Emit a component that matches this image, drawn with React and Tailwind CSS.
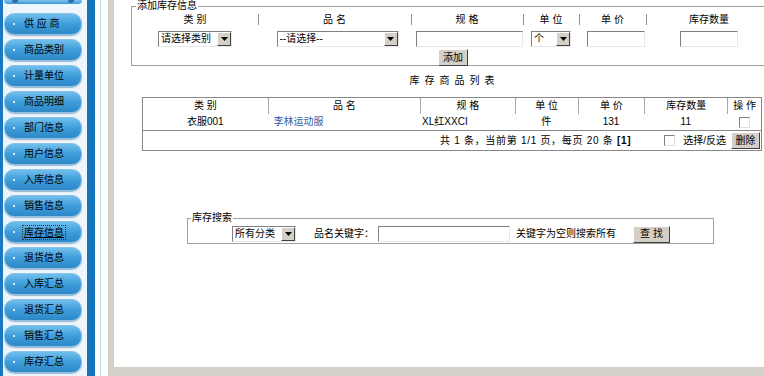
import React from 'react';

const font = { fontFamily: '"Liberation Sans", "Noto Sans CJK SC", sans-serif' };

const menus = ['供 应 商', '商品类别', '计量单位', '商品明细', '部门信息', '用户信息', '入库信息', '销售信息', '库存信息', '退货信息', '入库汇总', '退货汇总', '销售汇总', '库存汇总'];

const Arrow = () => (
  <div className='w-[14px] h-[14px] bg-[#d4d0c8] border border-t-white border-l-white border-r-[#404040] border-b-[#404040] flex items-center justify-center shrink-0'>
    <svg width='7' height='4' viewBox='0 0 7 4'><path d='M0 0h7L3.5 4z' fill='#000' /></svg>
  </div>
);

const Select = ({ text, className }) => (
  <div className={`h-[16px] bg-white border border-t-[#808080] border-l-[#808080] border-r-[#e8e8e8] border-b-[#e8e8e8] flex items-center pl-[2px] ${className}`}>
    <span className='flex-1 text-[10px] leading-[14px] whitespace-nowrap overflow-hidden'>{text}</span>
    <Arrow />
  </div>
);

const Input = ({ className }) => (
  <div className={`h-[16px] bg-white border border-t-[#808080] border-l-[#808080] border-r-[#e8e8e8] border-b-[#e8e8e8] ${className}`} />
);

const Btn = ({ children, className }) => (
  <div className={`bg-[#d4d0c8] border border-t-white border-l-white border-r-[#404040] border-b-[#404040] text-[10px] leading-[14px] flex items-center justify-center ${className}`}>
    {children}
  </div>
);

const Check = ({ className = '' }) => (
  <div className={`w-[11px] h-[11px] bg-white border border-t-[#808080] border-l-[#808080] border-r-[#e0e0e0] border-b-[#e0e0e0] ${className}`} />
);

const Sidebar = () => (
  <div className='w-[87px] h-full bg-[#eef5fb] border-l-[3px] border-l-[#1a78c2] shrink-0 overflow-hidden'>
    <div className='ml-[1px] w-[78px] h-[4px] rounded-b-[6px] bg-gradient-to-b from-[#7cc2ec] to-[#3b97d4] flex justify-between px-[8px]'>
      <div className='w-[6px] h-[3px] rounded-b-full bg-[#2a6fa8]' />
      <div className='w-[6px] h-[3px] rounded-b-full bg-[#2a6fa8]' />
    </div>
    <div className='flex flex-col gap-[4px] mt-[9px]'>
      {menus.map((m) => (
        <div key={m} className='ml-[1px] w-[78px] h-[22px] rounded-[10px] border border-[#8ec2e6] bg-gradient-to-b from-[#6fbfec] via-[#3e9dda] to-[#2d88c8] flex items-center shadow-[0_1px_1px_rgba(0,60,120,0.35)]'>
          <div className='w-[2px] h-[2px] bg-white/80 ml-[8px] mr-[9px]' />
          {m === '库存信息' ? (
            <span className='text-[10px] leading-[11px] text-black underline outline-1 outline-dotted outline-[#333] outline-offset-[1px]'>{m}</span>
          ) : (
            <span className='text-[10px] leading-[14px] text-black whitespace-pre'>{m}</span>
          )}
        </div>
      ))}
    </div>
  </div>
);

const cols = [126, 153, 112, 56, 67, 126];
const heads = ['类 别', '品 名', '规 格', '单 位', '单 价', '库存数量'];

const tcols = [125, 153, 95, 63, 67, 83, 34];
const theads = ['类 别', '品 名', '规 格', '单 位', '单 价', '库存数量', '操 作'];

const Main = () => (
  <div className='flex-1 h-full bg-white overflow-hidden'>
    {/* 添加库存信息 */}
    <fieldset className='ml-[17px] w-[660px] h-[66px] border border-[#a0a0a0] px-0'>
      <legend className='text-[10px] leading-[12px] ml-[4px] px-[1px]'>添加库存信息</legend>
      <div className='flex h-[14px] mt-[1px]'>
        {heads.map((h, i) => (
          <div key={h} style={{ width: cols[i] }} className='relative flex items-center justify-center text-[10px] leading-[14px] whitespace-pre'>
            {i > 0 && <div className='absolute left-0 top-[1px] h-[11px] w-[2px] border-l border-l-[#909090] border-r border-r-white' />}
            {h}
          </div>
        ))}
      </div>
      <div className='flex h-[17px] mt-[3px] items-center'>
        <div style={{ width: cols[0] }} className='flex justify-center'><Select text='请选择类别' className='w-[74px]' /></div>
        <div style={{ width: cols[1] }} className='flex justify-center pl-[6px]'><Select text='--请选择--' className='w-[122px]' /></div>
        <div style={{ width: cols[2] }} className='flex justify-end'><Input className='w-[107px]' /></div>
        <div style={{ width: cols[3] }} className='flex justify-center'><Select text='个' className='w-[40px]' /></div>
        <div style={{ width: cols[4] }} className='flex justify-center pl-[6px]'><Input className='w-[58px]' /></div>
        <div style={{ width: cols[5] }} className='flex justify-center'><Input className='w-[58px]' /></div>
      </div>
      <div className='flex mt-[2px]'>
        <Btn className='ml-[306px] w-[30px] h-[17px]'>添加</Btn>
      </div>
    </fieldset>

    {/* 列表 */}
    <div className='ml-[28px] w-[620px] mt-[8px] h-[14px] text-center text-[10px] leading-[14px] tracking-[5px] pl-[5px]'>库存商品列表</div>
    <div className='ml-[28px] w-[620px] mt-[9px] border border-[#888]'>
      <div className='flex h-[16px]'>
        {theads.map((h, i) => (
          <div key={h} style={{ width: tcols[i] }} className={`flex items-center justify-center text-[10px] leading-[14px] whitespace-pre ${i > 0 ? 'border-l border-l-[#a8a8a8]' : ''}`}>{h}</div>
        ))}
      </div>
      <div className='flex h-[17px] border-b border-b-[#888] text-[10px] leading-[14px] items-center'>
        <div style={{ width: tcols[0] }} className='text-center'>衣服001</div>
        <div style={{ width: tcols[1] }} className='pl-[6px] text-[#2f5fa5]'>李林运动服</div>
        <div style={{ width: tcols[2] }} className='pl-[2px]'>XL红XXCI</div>
        <div style={{ width: tcols[3] }} className='text-center'>件</div>
        <div style={{ width: tcols[4] }} className='text-center'>131</div>
        <div style={{ width: tcols[5] }} className='text-center'>11</div>
        <div style={{ width: tcols[6] }} className='flex justify-center'>
          <Check />
        </div>
      </div>
      <div className='flex h-[19px] items-center justify-end text-[10px] leading-[14px] pr-[1px]'>
        <span className='whitespace-pre tracking-[0.7px]'>共 1 条，当前第 1/1 页，每页 20 条 <b>[1]</b></span>
        <Check className='ml-[33px]' />
        <span className='ml-[8px]'>选择/反选</span>
        <Btn className='ml-[5px] w-[29px] h-[17px]'>删除</Btn>
      </div>
    </div>

    {/* 库存搜索 */}
    <fieldset className='ml-[73px] mt-[61px] w-[527px] h-[32px] border border-[#a0a0a0] px-0'>
      <legend className='text-[10px] leading-[12px] ml-[3px] px-[1px]'>库存搜索</legend>
      <div className='flex items-center h-[18px] mt-[1px]'>
        <Select text='所有分类' className='ml-[44px] w-[64px]' />
        <span className='ml-[18px] text-[10px] leading-[14px]'>品名关键字：</span>
        <Input className='ml-[4px] w-[132px]' />
        <span className='ml-[6px] text-[10px] leading-[14px]'>关键字为空则搜索所有</span>
        <Btn className='ml-[17px] w-[37px] h-[17px] whitespace-pre'>查 找</Btn>
      </div>
    </fieldset>
  </div>
);

export default function App() {
  return (
    <div className='w-[764px] h-[376px] flex overflow-hidden bg-white text-black' style={font}>
      <Sidebar />
      <div className='w-[8px] h-full bg-[#1373bb] shrink-0' />
      <div className='w-[13px] h-full bg-white shrink-0 flex'>
        <div className='ml-[5px] w-[1px] h-full bg-[#b8d4ec]' />
      </div>
      <div className='flex-1 h-full bg-[#d4d0c8] pl-[6px] pb-[9px] flex'>
        <Main />
      </div>
    </div>
  );
}
